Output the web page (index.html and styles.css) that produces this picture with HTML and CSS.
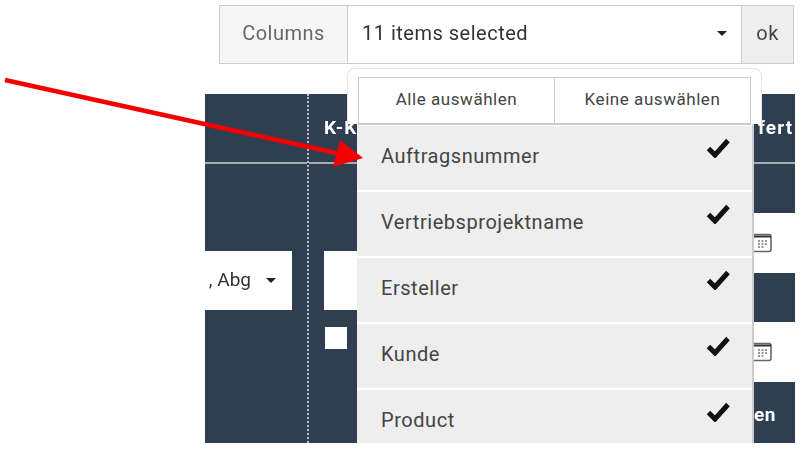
FILE: index.html
```html
<!DOCTYPE html>
<html lang="en">
<head>
    <meta charset="UTF-8">
    <meta name="viewport" content="width=device-width, initial-scale=1.0">
    <title>Columns</title>
    <link rel="stylesheet" href="styles.css">
</head>
<body>

<div class="page">
    <div class="toolbar">
        <div class="addon">Columns</div>
        <div class="select-box">
            <span>11 items selected</span>
            <span class="caret"></span>
        </div>
        <button class="ok-btn">ok</button>
    </div>

    <div class="table">
        <div class="col col-a">
            <div class="head"></div>
            <div class="filter">
                <div class="filter-select">
                    <span class="filter-text">, Abg</span>
                    <span class="caret"></span>
                </div>
            </div>
        </div>
        <div class="col col-b">
            <div class="head"><span class="head-text">K-K</span></div>
            <div class="filter">
                <div class="filter-input"></div>
                <div class="filter-check"></div>
            </div>
        </div>
        <div class="col col-c">
            <div class="head"><span class="head-text">fert</span></div>
            <div class="cell-dark dark-1"></div>
            <div class="cell-date">
                <svg class="cal" viewBox="0 0 21 20"><path d="M3 1.500h15a2 2 0 0 1 2 2v13a2 2 0 0 1-2 2H3" fill="none" stroke="#666" stroke-width="1.600"/><path d="M0 3.500h20" stroke="#333" stroke-width="2"/><path d="M7 8h2M10.500 8h2M14 8h2M7 11h2M10.500 11h2M14 11h2M7 14h2M10.500 14h2" stroke="#777" stroke-width="1.300"/></svg>
            </div>
            <div class="cell-dark dark-2"></div>
            <div class="cell-date">
                <svg class="cal" viewBox="0 0 21 20"><path d="M3 1.500h15a2 2 0 0 1 2 2v13a2 2 0 0 1-2 2H3" fill="none" stroke="#666" stroke-width="1.600"/><path d="M0 3.500h20" stroke="#333" stroke-width="2"/><path d="M7 8h2M10.500 8h2M14 8h2M7 11h2M10.500 11h2M14 11h2M7 14h2M10.500 14h2" stroke="#777" stroke-width="1.300"/></svg>
            </div>
            <div class="cell-dark dark-3"><span class="head-text">en</span></div>
        </div>
    </div>

    <div class="menu">
        <div class="menu-head">
            <button class="menu-btn">Alle auswählen</button>
            <button class="menu-btn">Keine auswählen</button>
        </div>
        <ul class="menu-list">
            <li class="menu-item">Auftragsnummer <svg class="check" viewBox="0 0 24 21"><path d="M2.500 11.500l6.500 6.500L22 3.500" fill="none" stroke="#111" stroke-width="5"/></svg></li>
            <li class="menu-item">Vertriebsprojektname <svg class="check" viewBox="0 0 24 21"><path d="M2.500 11.500l6.500 6.500L22 3.500" fill="none" stroke="#111" stroke-width="5"/></svg></li>
            <li class="menu-item">Ersteller <svg class="check" viewBox="0 0 24 21"><path d="M2.500 11.500l6.500 6.500L22 3.500" fill="none" stroke="#111" stroke-width="5"/></svg></li>
            <li class="menu-item">Kunde <svg class="check" viewBox="0 0 24 21"><path d="M2.500 11.500l6.500 6.500L22 3.500" fill="none" stroke="#111" stroke-width="5"/></svg></li>
            <li class="menu-item">Product <svg class="check" viewBox="0 0 24 21"><path d="M2.500 11.500l6.500 6.500L22 3.500" fill="none" stroke="#111" stroke-width="5"/></svg></li>
        </ul>
    </div>

    <svg class="arrow" viewBox="0 0 802 449">
        <path d="M5 80L345 155" stroke="#f40000" stroke-width="4.500"/>
        <path d="M340 140L363 158L333 167Z" fill="#f40000"/>
    </svg>
</div>

</body>
</html>
```

FILE: styles.css
```css
body {
    font-family: 'Roboto', sans-serif;
    margin: 0;
    padding: 0;
    background-color: white;
    color: #333;
}

.page {
    position: relative;
    width: 802px;
    height: 449px;
    overflow: hidden;
    filter: blur(0.6px);
}

/* top bar */
.toolbar {
    display: flex;
    height: 59px;
    margin: 5px 8px 0 219px;
    border: 1px solid #ccc;
    box-sizing: border-box;
    font-size: 20px;
    letter-spacing: 0.5px;
}

.addon {
    width: 128px;
    padding-bottom: 3px;
    box-sizing: border-box;
    display: flex;
    align-items: center;
    justify-content: center;
    background-color: #f6f6f6;
    color: #666;
    border-right: 1px solid #ccc;
}

.select-box {
    flex: 1;
    display: flex;
    align-items: center;
    justify-content: space-between;
    padding: 0 14px 3px 14px;
}

.ok-btn {
    width: 52px;
    padding: 0 0 3px;
    background-color: #eee;
    color: #444;
    border: none;
    border-left: 1px solid #ccc;
    font: inherit;
    letter-spacing: inherit;
}

.caret {
    width: 0;
    height: 0;
    border-left: 5px solid transparent;
    border-right: 5px solid transparent;
    border-top: 5px solid #222;
}

/* table behind the dropdown */
.table {
    display: flex;
    width: 590px;
    height: 349px;
    margin: 30px 0 0 205px;
    background-color: #2f3e50;
    color: white;
    font-weight: bold;
    font-size: 19px;
}

.col-a {
    width: 102px;
    border-right: 2px dotted #b9c0c8;
}

.col-b {
    flex: 1;
}

.col-c {
    width: 41px;
    overflow: hidden;
}

.head {
    height: 68px;
    border-bottom: 2px solid #a5abb2;
    white-space: nowrap;
    display: flex;
    align-items: center;
}

.col-b .head-text {
    margin-left: 15px;
    margin-top: -2px;
    letter-spacing: 1px;
}

.col-c .head .head-text {
    margin-left: 4px;
    margin-top: -2px;
    letter-spacing: 1.200px;
}

.filter {
    padding-top: 87px;
}

.filter-select {
    width: 87px;
    height: 59px;
    background-color: white;
    color: #333;
    display: flex;
    align-items: center;
    justify-content: flex-end;
    gap: 15px;
    padding-right: 16px;
    box-sizing: border-box;
    font-weight: normal;
    font-size: 19px;
}

.filter-text {
    white-space: nowrap;
    margin-top: -2px;
}

.filter-input {
    width: 100px;
    height: 59px;
    margin-left: 15px;
    background-color: white;
}

.filter-check {
    width: 22px;
    height: 22px;
    margin: 17px 0 0 16px;
    background-color: white;
}

.cell-dark {
    display: flex;
    align-items: center;
}

.dark-1 {
    height: 49px;
}

.dark-2 {
    height: 49px;
}

.dark-3 {
    height: 61px;
}

.dark-3 .head-text {
    margin: 4px 0 0 0;
    letter-spacing: 0.5px;
}

.cell-date {
    height: 60px;
    background-color: white;
    display: flex;
    align-items: center;
}

.cal {
    width: 21px;
    height: 20px;
    margin-left: -3px;
}

/* open dropdown */
.menu {
    position: absolute;
    left: 347px;
    top: 68px;
    width: 415px;
    height: 375px;
    overflow: hidden;
}

.menu-head {
    display: flex;
    height: 56px;
    padding: 8px 10px 0;
    box-sizing: border-box;
    background-color: white;
    border: 1px solid #e6e6e6;
    border-bottom: none;
    border-radius: 8px 8px 0 0;
}

.menu-btn {
    flex: 1;
    height: 48px;
    background-color: white;
    color: #444;
    border: 1px solid #ccc;
    border-bottom: 2px solid #ccc;
    padding: 0 0 3px;
    font-family: inherit;
    font-size: 17px;
    letter-spacing: 0.55px;
}

.menu-btn + .menu-btn {
    border-left: none;
}

.menu-list {
    list-style: none;
    margin: 0;
    padding: 2px 0 0;
    width: 397px;
    margin-left: 10px;
    border-right: 2px solid #ccc;
    background-color: white;
    box-sizing: border-box;
    height: 319px;
}

.menu-item {
    height: 64px;
    margin-bottom: 2px;
    padding: 0 22px 4px 24px;
    box-sizing: border-box;
    background-color: #eee;
    color: #444;
    font-size: 20px;
    letter-spacing: 0.55px;
    display: flex;
    align-items: center;
    justify-content: space-between;
}

.check {
    width: 24px;
    height: 21px;
    margin-top: -18px;
}

.arrow {
    position: absolute;
    left: 0;
    top: 0;
    width: 802px;
    height: 449px;
}
```
